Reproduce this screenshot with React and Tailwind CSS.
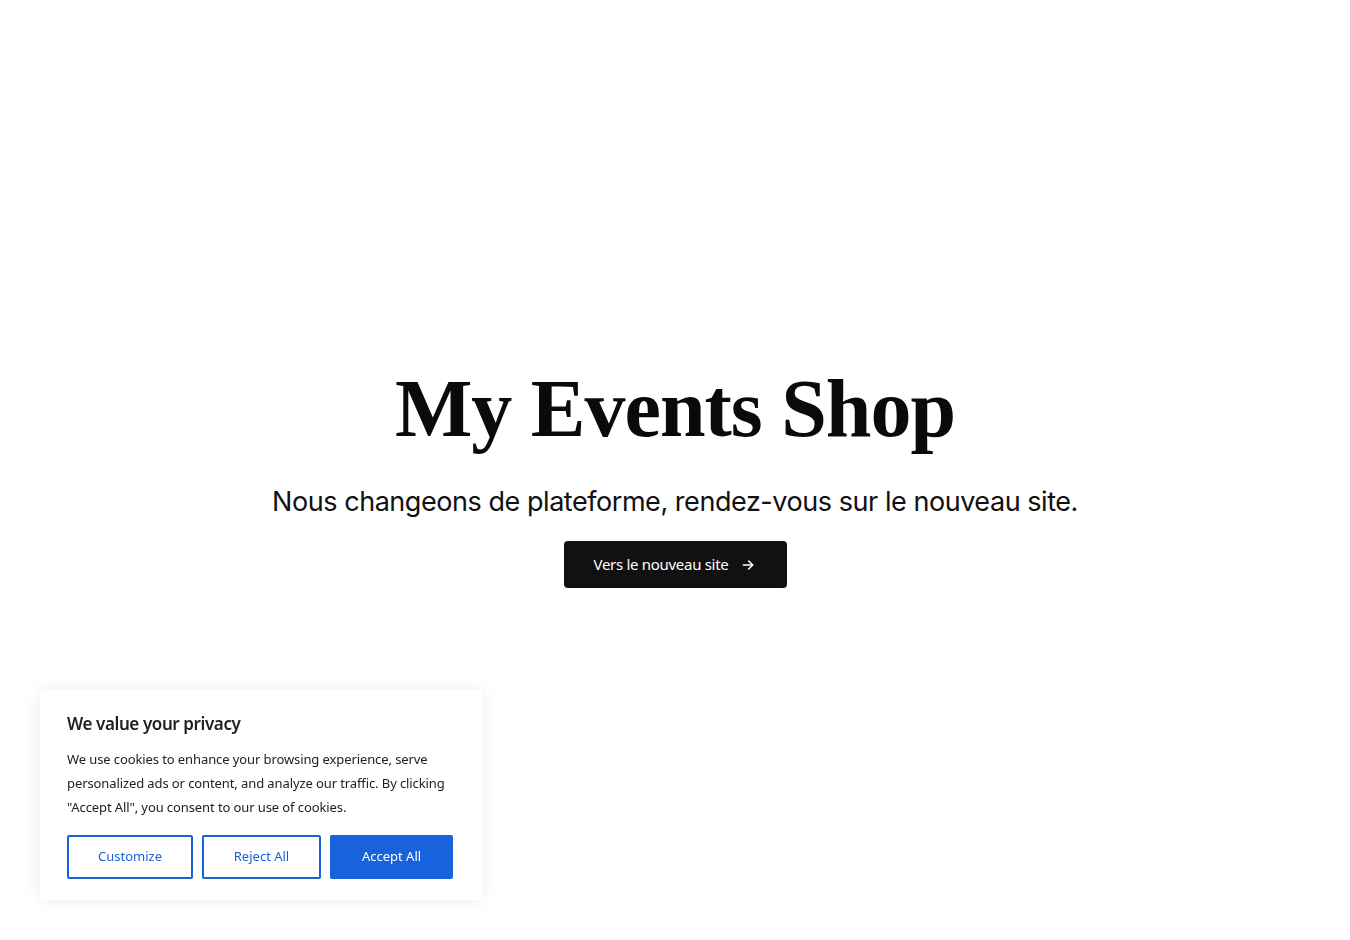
import React from "react";

function Arrow() {
  return (
    <svg width="16" height="16" viewBox="0 0 24 24" fill="none" stroke="currentColor" strokeWidth="2.4" strokeLinecap="round" strokeLinejoin="round">
      <path d="M5 12h14" />
      <path d="M13 6l6 6-6 6" />
    </svg>
  );
}

export default function App() {
  return (
    <div className="relative w-full min-h-[940px] bg-white">
      <main className="flex flex-col items-center pt-[363px]">
        <h1
          className="text-[82px] leading-[92px] font-bold text-[#0a0a0a] tracking-[-1px]"
          style={{ fontFamily: '"Liberation Serif", "DejaVu Serif", serif' }}
        >
          My Events Shop
        </h1>
        <p
          className="mt-[29px] text-[27px] leading-[36px] text-[#111111] tracking-[-0.45px]"
          style={{ fontFamily: 'Inter, "Open Sans", sans-serif' }}
        >
          Nous changeons de plateforme, rendez-vous sur le nouveau site.
        </p>
        <a
          href="#"
          className="mt-[21px] flex items-center justify-center gap-[12px] w-[223px] h-[47px] rounded-[4px] bg-[#111111] text-white text-[15px]"
          style={{ fontFamily: '"Noto Sans", Roboto, sans-serif', letterSpacing: "-0.3px" }}
        >
          <span>Vers le nouveau site</span>
          <Arrow />
        </a>
      </main>

      <div
        className="fixed left-[40px] bottom-[40px] w-[442px] bg-white rounded-[4px] px-[27px] pt-[23px] pb-[21px] shadow-[0_0_18px_rgba(0,0,0,0.08)]"
        style={{ fontFamily: '"Noto Sans", "Open Sans", sans-serif' }}
      >
        <p className="text-[17px] leading-[22px] font-semibold text-[#212121] tracking-[-0.4px]">We value your privacy</p>
        <p className="mt-[12px] text-[13px] leading-[24px] text-[#212121] tracking-[-0.1px]">
          We use cookies to enhance your browsing experience, serve personalized ads or content, and analyze our traffic. By clicking "Accept All", you consent to our use of cookies.
        </p>
        <div className="mt-[16px] flex gap-[9px]">
          <button className="w-[126px] h-[44px] border-2 border-[#1863dc] rounded-[2px] text-[#1863dc] text-[13px] bg-white">Customize</button>
          <button className="w-[119px] h-[44px] border-2 border-[#1863dc] rounded-[2px] text-[#1863dc] text-[13px] bg-white">Reject All</button>
          <button className="w-[123px] h-[44px] border-2 border-[#1863dc] rounded-[2px] text-white text-[13px] bg-[#1863dc]">Accept All</button>
        </div>
      </div>
    </div>
  );
}
